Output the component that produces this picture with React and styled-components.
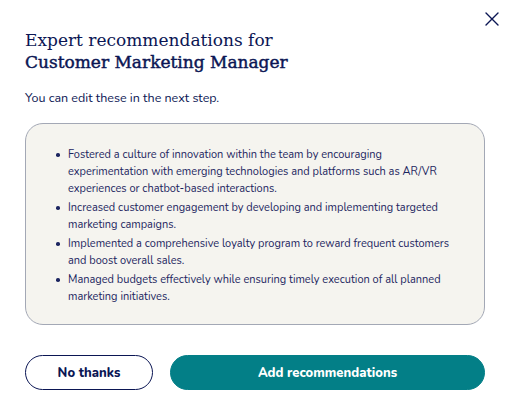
import React from 'react'
import styled, { createGlobalStyle } from 'styled-components'

const GlobalStyle = createGlobalStyle`
  html, body {
    margin: 0;
    padding: 0;
    background: #ffffff;
  }
  body {
    font-family: 'Nunito', 'Noto Sans', 'Open Sans', sans-serif;
    color: #0b1654;
  }
`

const Dialog = styled.div`
  position: relative;
  width: 512px;
  height: 411px;
  box-sizing: border-box;
  padding: 29px 27px 0 25px;
  display: flex;
  flex-direction: column;
`

const CloseButton = styled.button`
  position: absolute;
  top: 10px;
  right: 11px;
  width: 18px;
  height: 18px;
  padding: 0;
  margin: 0;
  border: none;
  background: none;
  display: flex;
  align-items: center;
  justify-content: center;
  cursor: pointer;
`

const Title = styled.h1`
  margin: 0;
  font-family: 'DejaVu Serif', 'Liberation Serif', serif;
  font-size: 17px;
  line-height: 22px;
  font-weight: 400;
  color: #0b1654;
  span {
    display: block;
    -webkit-text-stroke: 0.45px #0b1654;
  }
`

const Subtitle = styled.p`
  margin: 16px 0 0;
  font-size: 12.5px;
  line-height: 18px;
  color: #0b1654;
`

const RecoBox = styled.div`
  margin-top: 16px;
  height: 202px;
  box-sizing: border-box;
  border: 1px solid #a3a8b5;
  border-radius: 18px;
  background: #f5f4ef;
  padding: 22px 20px 0 42px;
`

const List = styled.ul`
  margin: 0;
  padding: 0;
  list-style: none;
  display: flex;
  flex-direction: column;
  gap: 2px;
`

const Item = styled.li`
  position: relative;
  font-size: 11px;
  line-height: 17px;
  color: #1c2560;
  &::before {
    content: '';
    position: absolute;
    left: -12px;
    top: 7px;
    width: 3.5px;
    height: 3.5px;
    border-radius: 50%;
    background: #1c2560;
  }
`

const Actions = styled.div`
  margin-top: 30px;
  display: flex;
  gap: 17px;
`

const Button = styled.button`
  height: 35px;
  box-sizing: border-box;
  border-radius: 18px;
  font-family: 'Nunito', 'Noto Sans', sans-serif;
  font-size: 13px;
  font-weight: 800;
  cursor: pointer;
  border: 1px solid ${(p) => (p.$primary ? '#037f87' : '#0b1654')};
  background: ${(p) => (p.$primary ? '#037f87' : '#ffffff')};
  color: ${(p) => (p.$primary ? '#ffffff' : '#0b1654')};
  width: ${(p) => (p.$primary ? '315px' : '128px')};
`

const items = [
  'Fostered a culture of innovation within the team by encouraging experimentation with emerging technologies and platforms such as AR/VR experiences or chatbot-based interactions.',
  'Increased customer engagement by developing and implementing targeted marketing campaigns.',
  'Implemented a comprehensive loyalty program to reward frequent customers and boost overall sales.',
  'Managed budgets effectively while ensuring timely execution of all planned marketing initiatives.',
]

const App = () => {
  return (
    <>
      <GlobalStyle />
      <Dialog>
        <CloseButton aria-label="Close">
          <svg width="14" height="14" viewBox="0 0 14 14">
            <path d="M1 1L13 13M13 1L1 13" stroke="#0b1654" strokeWidth="1.4" strokeLinecap="round" />
          </svg>
        </CloseButton>
        <Title>
          Expert recommendations for
          <span>Customer Marketing Manager</span>
        </Title>
        <Subtitle>You can edit these in the next step.</Subtitle>
        <RecoBox>
          <List>
            {items.map((text) => (
              <Item key={text}>{text}</Item>
            ))}
          </List>
        </RecoBox>
        <Actions>
          <Button>No thanks</Button>
          <Button $primary>Add recommendations</Button>
        </Actions>
      </Dialog>
    </>
  )
}

export default App
